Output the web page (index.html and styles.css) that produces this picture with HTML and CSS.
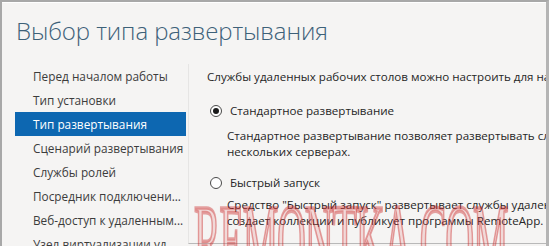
FILE: index.html
```html
<!DOCTYPE html>
<html lang="ru">
<head>
<meta charset="utf-8">
<title>Выбор типа развертывания</title>
<link rel="stylesheet" href="styles.css">
</head>
<body>
<div class="window">
  <div class="header">
    <h1 class="title">Выбор типа развертывания</h1>
  </div>
  <div class="main">
    <ul class="nav">
      <li class="nav-item">Перед началом работы</li>
      <li class="nav-item">Тип установки</li>
      <li class="nav-item active">Тип развертывания</li>
      <li class="nav-item">Сценарий развертывания</li>
      <li class="nav-item">Службы ролей</li>
      <li class="nav-item">Посредник подключени...</li>
      <li class="nav-item">Веб-доступ к удаленным...</li>
      <li class="nav-item">Узел виртуализации уд...</li>
    </ul>
    <div class="content">
      <p class="intro">Службы удаленных рабочих столов можно настроить для на одном или нескольких серверах.</p>
      <div class="option">
        <span class="radio checked"></span>
        <span class="option-label">Стандартное развертывание</span>
      </div>
      <p class="desc first">Стандартное развертывание позволяет развертывать службы удаленных рабочих столов на<br>нескольких серверах.</p>
      <div class="option second">
        <span class="radio"></span>
        <span class="option-label">Быстрый запуск</span>
      </div>
      <p class="desc">Средство "Быстрый запуск" развертывает службы удаленных рабочих столов на одном сервере,<br>создает коллекции и публикует программы RemoteApp.</p>
    </div>
  </div>
  <div class="watermark">REMONTKA.COM</div>
</div>
</body>
</html>
```

FILE: styles.css
```css
html, body {
  margin: 0;
  padding: 0;
}
body {
  width: 549px;
  height: 246px;
  overflow: hidden;
  font-family: "Open Sans", "Noto Sans", sans-serif;
  background: #f4f3f2;
}
.window {
  position: relative;
  box-sizing: border-box;
  width: 549px;
  height: 246px;
  border-top: 2px solid #a8a8a8;
  border-left: 2px solid #a8a8a8;
  border-right: 3px solid #b4b4b4;
  background: #f5f4f3;
  overflow: hidden;
}
.header {
  height: 62px;
  box-sizing: border-box;
  padding: 11px 0 0 14px;
  border-top: 1px solid #ffffff;
}
.title {
  margin: 0;
  font-family: "Open Sans", sans-serif;
  font-weight: 300;
  font-size: 24px;
  line-height: 34px;
  color: #3d6179;
  white-space: nowrap;
  letter-spacing: -0.1px;
}
.main {
  display: flex;
  height: 180px;
}
.nav {
  list-style: none;
  margin: 0 0 0 13px;
  padding: 0;
  width: 171px;
  flex: none;
}
.nav-item {
  height: 24px;
  line-height: 24px;
  padding-left: 18px;
  font-size: 11.8px;
  color: #3c3c3c;
  white-space: nowrap;
  overflow: hidden;
}
.nav-item.active {
  background: #0d67b1;
  color: #ffffff;
}
.content {
  flex: 1;
  min-width: 0;
  box-sizing: border-box;
  margin-left: 2px;
  padding: 5px 0 0 18px;
  border-left: 1px solid #e6e5e4;
  border-bottom: 1px solid #b9b9b9;
  overflow: hidden;
  font-size: 11.6px;
  color: #262626;
}
.intro {
  margin: 0;
  line-height: 16px;
  white-space: nowrap;
}
.option {
  display: flex;
  align-items: center;
  gap: 8px;
  margin-top: 18px;
  height: 16px;
  padding-left: 3px;
}
.option.second {
  margin-top: 15px;
}
.option-label {
  line-height: 16px;
  white-space: nowrap;
}
.radio {
  box-sizing: border-box;
  width: 12px;
  height: 12px;
  border: 1px solid #4a4a4a;
  border-radius: 50%;
  background: #ffffff;
  display: flex;
  align-items: center;
  justify-content: center;
  flex: none;
}
.radio.checked::after {
  content: "";
  width: 6px;
  height: 6px;
  border-radius: 50%;
  background: #1a1a1a;
}
.desc {
  margin: 9px 0 0 20px;
  line-height: 16px;
  white-space: nowrap;
}
.option.second + .desc {
  margin-top: 6px;
}
.watermark {
  position: absolute;
  left: 192px;
  top: 188px;
  font-family: "Liberation Serif", serif;
  font-size: 40px;
  line-height: 40px;
  color: rgba(225, 110, 110, 0.2);
  -webkit-text-stroke: 1.4px rgba(200, 30, 30, 0.4);
  transform: scaleY(2.6);
  transform-origin: top left;
  white-space: nowrap;
  pointer-events: none;
  letter-spacing: -1.2px;
}
```
